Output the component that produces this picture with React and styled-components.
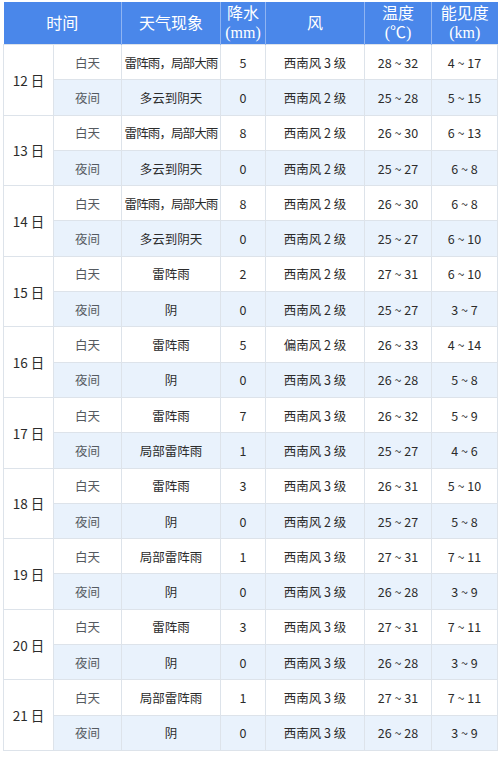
import styled, { createGlobalStyle } from "styled-components";

const GlobalStyle = createGlobalStyle`
    body {
        margin: 0;
        background: #ffffff;
        font-family: "Noto Sans CJK SC", "Noto Sans", sans-serif;
    }
`;

const Page = styled.div`
    padding: 2px 3px 0 3px;
    width: 494px;
`;

const Table = styled.table`
    width: 494px;
    table-layout: fixed;
    border-collapse: collapse;
`;

const HeadCell = styled.th`
    background: #4a87ea;
    color: #ffffff;
    font-family: "Liberation Serif", "Noto Sans CJK SC", serif;
    font-weight: normal;
    font-size: 16px;
    line-height: 19px;
    height: 42px;
    padding: 0;
    border-left: 1px solid #8fb4f2;
    text-align: center;

    &:first-child {
        border-left: none;
    }
`;

const Row = styled.tr`
    background: ${(p) => (p.$night ? "#e9f2fc" : "#ffffff")};
`;

const Cell = styled.td`
    height: 34.3px;
    padding: 0;
    border: 1px solid #dde3ea;
    text-align: center;
    font-size: 12.5px;
    letter-spacing: ${(p) => (p.$tight ? "-0.9px" : "0")};
    color: #2b2b2b;
    white-space: nowrap;
    overflow: hidden;
`;

const DateCell = styled(Cell)`
    background: #ffffff;
    font-size: 13.5px;
`;

const PeriodCell = styled(Cell)`
    color: #555a60;
`;

const days = [
    ["12日", ["雷阵雨，局部大雨", "5", "西南风 3 级", "28 ~ 32", "4 ~ 17"], ["多云到阴天", "0", "西南风 2 级", "25 ~ 28", "5 ~ 15"]],
    ["13日", ["雷阵雨，局部大雨", "8", "西南风 2 级", "26 ~ 30", "6 ~ 13"], ["多云到阴天", "0", "西南风 2 级", "25 ~ 27", "6 ~ 8"]],
    ["14日", ["雷阵雨，局部大雨", "8", "西南风 2 级", "26 ~ 30", "6 ~ 8"], ["多云到阴天", "0", "西南风 2 级", "25 ~ 27", "6 ~ 10"]],
    ["15日", ["雷阵雨", "2", "西南风 2 级", "27 ~ 31", "6 ~ 10"], ["阴", "0", "西南风 2 级", "25 ~ 27", "3 ~ 7"]],
    ["16日", ["雷阵雨", "5", "偏南风 2 级", "26 ~ 33", "4 ~ 14"], ["阴", "0", "西南风 3 级", "26 ~ 28", "5 ~ 8"]],
    ["17日", ["雷阵雨", "7", "西南风 3 级", "26 ~ 32", "5 ~ 9"], ["局部雷阵雨", "1", "西南风 3 级", "25 ~ 27", "4 ~ 6"]],
    ["18日", ["雷阵雨", "3", "西南风 3 级", "26 ~ 31", "5 ~ 10"], ["阴", "0", "西南风 2 级", "25 ~ 27", "5 ~ 8"]],
    ["19日", ["局部雷阵雨", "1", "西南风 3 级", "27 ~ 31", "7 ~ 11"], ["阴", "0", "西南风 3 级", "26 ~ 28", "3 ~ 9"]],
    ["20日", ["雷阵雨", "3", "西南风 3 级", "27 ~ 31", "7 ~ 11"], ["阴", "0", "西南风 3 级", "26 ~ 28", "3 ~ 9"]],
    ["21日", ["局部雷阵雨", "1", "西南风 3 级", "27 ~ 31", "7 ~ 11"], ["阴", "0", "西南风 3 级", "26 ~ 28", "3 ~ 9"]],
];

function Values({ values }) {
    return values.map((v, i) => (
        <Cell key={i} $tight={v.includes("，")}>{v}</Cell>
    ));
}

export default function App() {
    return (
        <Page>
            <GlobalStyle />
            <Table>
                <colgroup>
                    <col style={{ width: 50 }} />
                    <col style={{ width: 68 }} />
                    <col style={{ width: 99 }} />
                    <col style={{ width: 45 }} />
                    <col style={{ width: 99 }} />
                    <col style={{ width: 67 }} />
                    <col style={{ width: 66 }} />
                </colgroup>
                <thead>
                    <tr>
                        <HeadCell colSpan={2}>时间</HeadCell>
                        <HeadCell>天气现象</HeadCell>
                        <HeadCell>降水<br />(mm)</HeadCell>
                        <HeadCell>风</HeadCell>
                        <HeadCell>温度<br />(℃)</HeadCell>
                        <HeadCell>能见度<br />(km)</HeadCell>
                    </tr>
                </thead>
                <tbody>
                    {days.map(([date, day, night]) => [
                        <Row key={date + "d"}>
                            <DateCell rowSpan={2}>{date.replace("日", " 日")}</DateCell>
                            <PeriodCell>白天</PeriodCell>
                            <Values values={day} />
                        </Row>,
                        <Row key={date + "n"} $night>
                            <PeriodCell>夜间</PeriodCell>
                            <Values values={night} />
                        </Row>,
                    ])}
                </tbody>
            </Table>
        </Page>
    );
}
